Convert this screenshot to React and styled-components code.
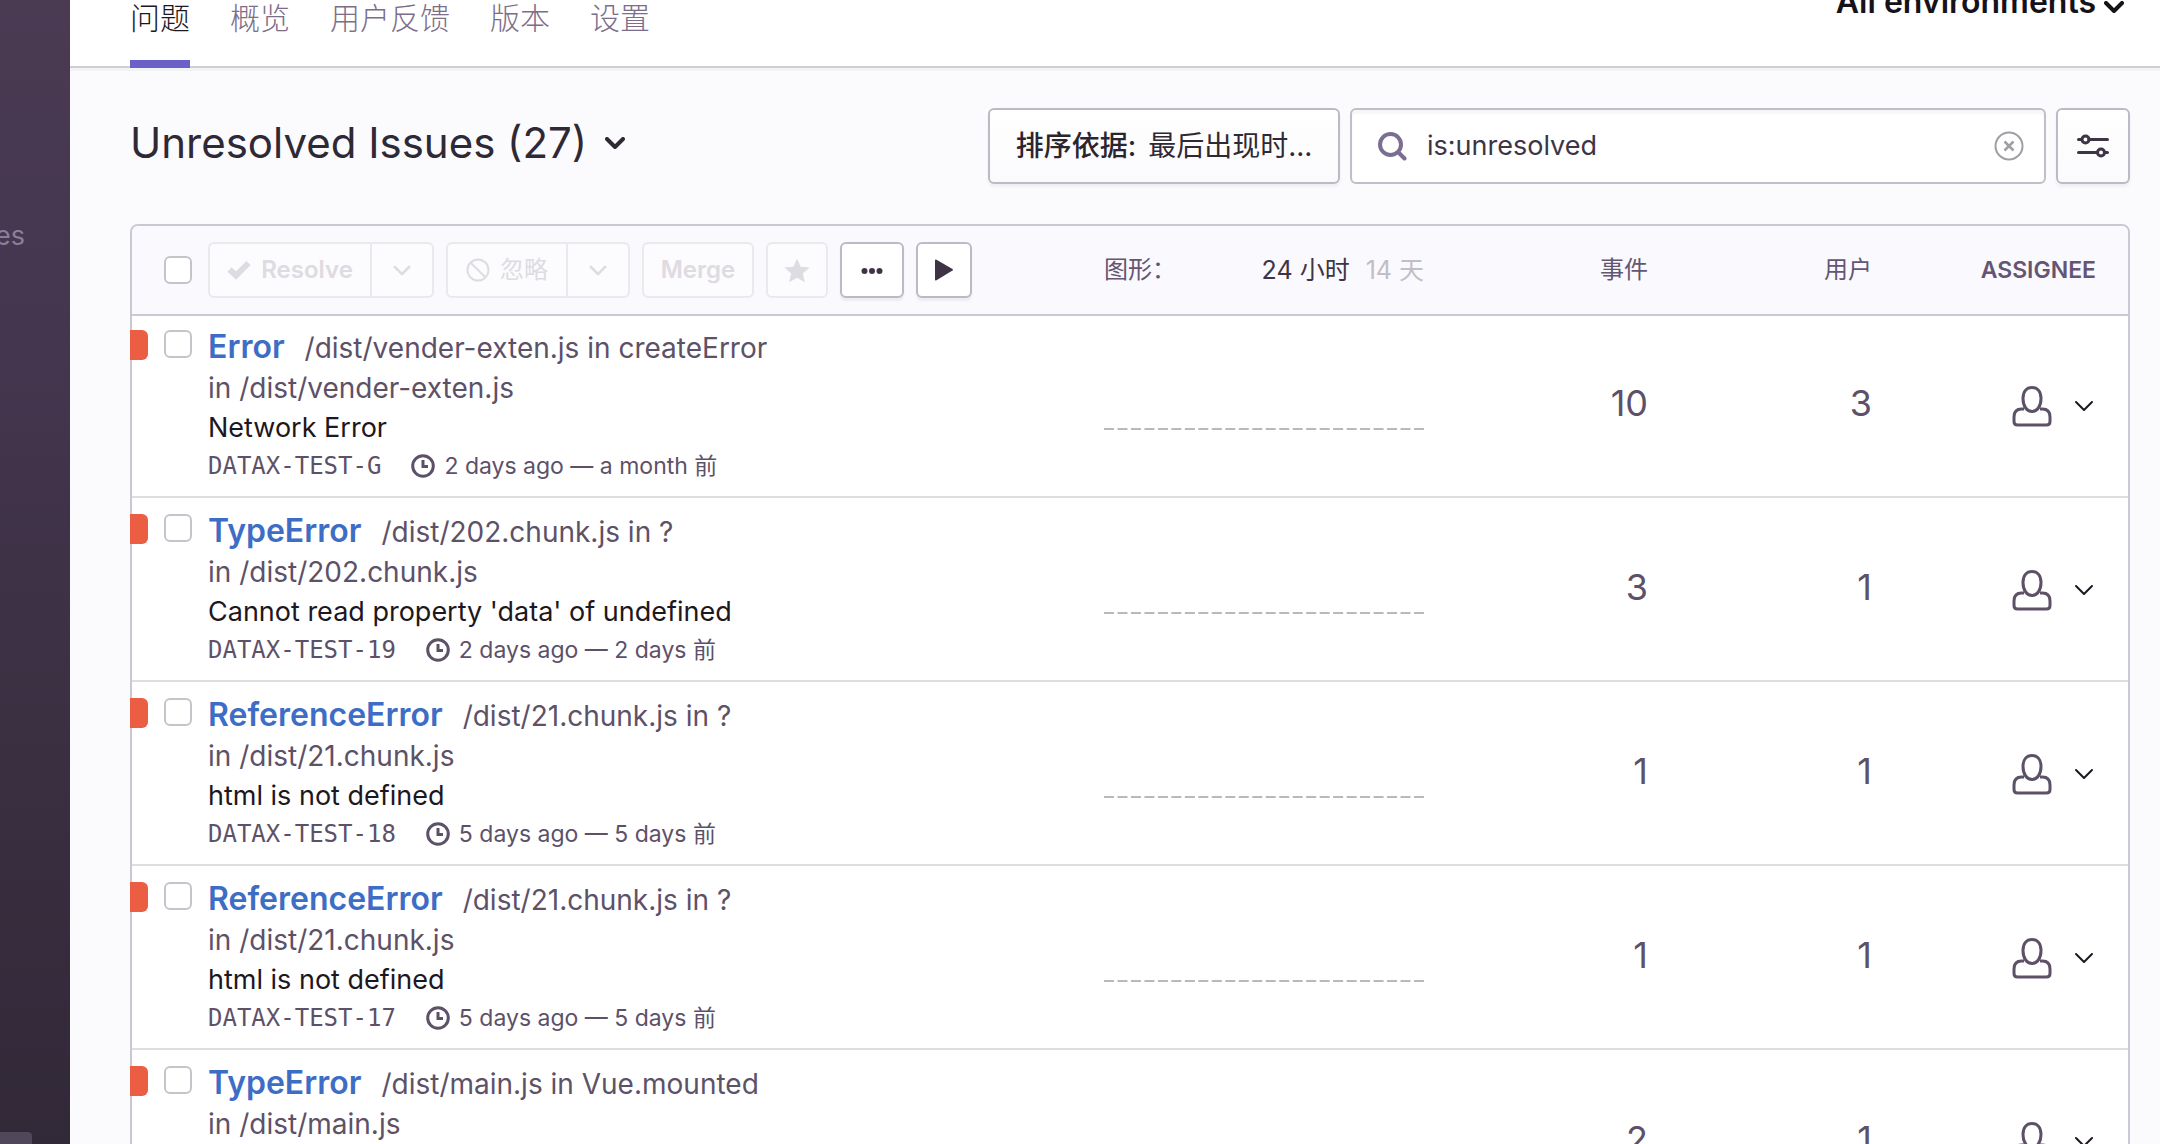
import React from "react";
import styled, { createGlobalStyle } from "styled-components";

const GlobalStyle = createGlobalStyle`
  * { box-sizing: border-box; }
  body {
    margin: 0;
    background: #fbfbfd;
    color: #2f2936;
    font: 400 27px/40px Inter, "Noto Sans CJK SC", sans-serif;
  }
  button, input { font: inherit; color: inherit; margin: 0; }
  button { cursor: pointer; }
  svg { display: block; flex: none; }
`;

const Shell = styled.div`
  display: flex;
  height: 100vh;
  overflow: hidden;
`;

const Sidebar = styled.nav`
  flex: none;
  width: 70px;
  display: flex;
  flex-direction: column;
  justify-content: space-between;
  padding-top: 216px;
  overflow: hidden;
  background: linear-gradient(#4a3a52 0%, #453750 25%, #382d3e 75%, #312838 100%);
`;

const SideLink = styled.a`
  color: #8d7d99;
  text-decoration: none;
  width: 25px;
  display: flex;
  justify-content: flex-end;
`;

const SideHandle = styled.div`
  width: 32px;
  height: 12px;
  border-top-right-radius: 4px;
  background: #51475a;
`;

const Main = styled.main`
  flex: 1;
  min-width: 0;
`;

const TopBar = styled.header`
  display: flex;
  justify-content: space-between;
  align-items: flex-start;
  height: 68px;
  padding: 0 30px 0 60px;
  background: #fff;
  border-bottom: 2px solid #cfced3;
  box-shadow: 0 3px 0 #f3f3f5;
`;

const Tabs = styled.div`
  display: flex;
  gap: 40px;
`;

const Tab = styled.a`
  height: 68px;
  font-size: 30px;
  font-weight: 300;
  line-height: 36px;
  text-decoration: none;
  color: ${(p) => (p.$active ? "#1d1721" : "#7c6e88")};
  border-bottom: 8px solid ${(p) => (p.$active ? "#6c5fc7" : "transparent")};
`;

const EnvButton = styled.button`
  display: flex;
  align-items: center;
  gap: 8px;
  margin-top: -18px;
  padding: 0 6px 0 0;
  border: 0;
  background: none;
  color: #161219;
  font-size: 32px;
  font-weight: 600;
  line-height: 40px;
`;

const EnvChevron = styled.span`
  padding-top: 10px;
`;

const Content = styled.div`
  padding: 40px 30px 0 60px;
`;

const Controls = styled.div`
  display: flex;
  align-items: center;
  gap: 10px;
  margin-bottom: 40px;
`;

const Heading = styled.h1`
  flex: 1;
  margin: 0;
  font-size: 42px;
  font-weight: 400;
  line-height: 70px;
`;

const HeadingButton = styled.button`
  display: flex;
  align-items: center;
  gap: 18px;
  padding: 0 0 6px;
  border: 0;
  background: none;
  line-height: 70px;
`;

const Control = styled.button`
  display: flex;
  align-items: center;
  justify-content: center;
  width: ${(p) => p.$width};
  height: 76px;
  padding: 0;
  border: 2px solid #bdbac6;
  border-radius: 6px;
  background: linear-gradient(#fff, #fbfafc);
  box-shadow: 0 3px 3px rgba(47, 41, 54, 0.05);
  font-size: 28px;
`;

const SortLabel = styled.span`
  font-weight: 500;
  color: #2b2530;
  margin-right: 12px;
`;

const SearchBox = styled.label`
  display: flex;
  align-items: center;
  width: 696px;
  height: 76px;
  padding: 0 20px 0 26px;
  border: 2px solid #c1bec9;
  border-radius: 6px;
  background: #fff;
  box-shadow: inset 0 4px 2px rgba(47, 41, 54, 0.04);
`;

const SearchInput = styled.input`
  flex: 1;
  min-width: 0;
  padding: 0 20px;
  border: 0;
  outline: 0;
  background: none;
  color: #3e3446;
`;

const IconButton = styled.button`
  padding: 0;
  border: 0;
  background: none;
`;

const Panel = styled.section`
  border: 2px solid #cbc8d4;
  border-radius: 8px;
  background: #fff;
`;

const Table = styled.table`
  width: 100%;
  table-layout: fixed;
  border-collapse: separate;
  border-spacing: 0;
`;

const Col = styled.col`
  width: ${(p) => p.$width};
`;

const Th = styled.th`
  height: 90px;
  padding: 0 ${(p) => p.$end || 0} 0 0;
  border-bottom: 2px solid #cbc8d4;
  background: #faf9fd;
  color: #645574;
  font-size: ${(p) => (p.$strong ? "23px" : "24px")};
  font-weight: ${(p) => (p.$strong ? 600 : 400)};
  text-align: ${(p) => (p.$strong || p.$right ? "right" : "left")};
  white-space: nowrap;
  &:first-child { border-top-left-radius: 6px; }
  &:last-child { border-top-right-radius: 6px; }
`;

const Toolbar = styled.div`
  display: flex;
  align-items: center;
  gap: 12px;
  padding-left: 32px;
`;

const CheckBox = styled.input`
  flex: none;
  appearance: none;
  width: 28px;
  height: 28px;
  margin: 0;
  border: 2px solid #c6c4ca;
  border-radius: 6px;
  background: #fff;
`;

const ButtonGroup = styled.div`
  display: flex;
  margin-left: ${(p) => p.$first ? "4px" : "0"};
`;

const ToolButton = styled.button`
  display: flex;
  align-items: center;
  justify-content: center;
  gap: 10px;
  width: ${(p) => p.$width};
  height: 56px;
  padding: 0;
  border: 2px solid ${(p) => (p.disabled ? "#eae9ee" : "#bdbac6")};
  border-radius: 6px;
  background: ${(p) => (p.disabled ? "#fcfbfd" : "#fff")};
  box-shadow: ${(p) => (p.disabled ? "none" : "0 3px 2px rgba(47, 41, 54, 0.06)")};
  color: ${(p) => (p.disabled ? "#dedce2" : "#3e3446")};
  font-size: 24px;
  font-weight: 600;
  ${ButtonGroup} &:first-child { border-radius: 6px 0 0 6px; }
  ${ButtonGroup} &:last-child { border-radius: 0 6px 6px 0; border-left: 0; }
`;

const IgnoreLabel = styled.span`
  font-weight: 400;
`;

const GraphHead = styled.div`
  display: flex;
  justify-content: space-between;
`;

const Periods = styled.div`
  display: flex;
  gap: 16px;
  font-size: 25px;
`;

const Period = styled.button`
  padding: 0;
  border: 0;
  background: none;
  color: ${(p) => (p.$active ? "#3e3446" : "#c1bec5")};
`;

const Td = styled.td`
  position: relative;
  height: 184px;
  vertical-align: top;
  padding: ${(p) => p.$top || "13px"} ${(p) => p.$end || 0} 0 0;
  border-bottom: 2px solid #dedde1;
  text-align: ${(p) => (p.$right ? "right" : "left")};
`;

const Row = styled.tr`
  &:first-child td { height: 182px; }
  &:first-child ${Td} > div { margin-top: -2px; }
`;

const Level = styled.span`
  position: absolute;
  left: -2px;
  top: ${(p) => (p.$first ? "14px" : "16px")};
  width: 18px;
  height: 30px;
  border-radius: 0 6px 6px 0;
  background: #ec5e44;
`;

const Issue = styled.div`
  display: flex;
  gap: 16px;
  padding-left: 32px;
  ${CheckBox} { margin-top: 3px; }
`;

const Summary = styled.div`
  min-width: 0;
  color: #5d5168;
  font-size: 28px;
  line-height: 40px;
`;

const Title = styled.div`
  display: flex;
  align-items: baseline;
  gap: 20px;
`;

const TitleLink = styled.a`
  color: #3d6dc4;
  font-size: 32px;
  font-weight: 600;
  text-decoration: none;
`;

const Message = styled.div`
  color: #1d1721;
  font-size: 27px;
`;

const Meta = styled.div`
  display: flex;
  align-items: center;
  font-size: 23px;
  line-height: 36px;
`;

const ShortId = styled.span`
  margin-right: 30px;
  font-size: 24px;
  font-family: "DejaVu Sans Mono", monospace;
`;

const Seen = styled.span`
  display: flex;
  align-items: center;
  gap: 9px;
`;

const Count = styled.div`
  color: #5d5168;
  font-size: 36px;
  line-height: 40px;
`;

const Assignee = styled.div`
  display: flex;
  justify-content: flex-end;
`;

const AssigneeButton = styled.button`
  display: flex;
  align-items: center;
  gap: 22px;
  padding: 0;
  border: 0;
  background: none;
`;

const Chevron = ({ size = 20, width = 3, color = "currentColor" }) => (
  <svg width={size} height={size / 2 + 2} viewBox="0 0 20 12" fill="none" stroke={color} strokeWidth={width} strokeLinecap="round" strokeLinejoin="round">
    <path d="M2 2l8 8 8-8" />
  </svg>
);

const CheckIcon = () => (
  <svg width="24" height="20" viewBox="0 0 24 20" fill="none" stroke="currentColor" strokeWidth="6">
    <path d="M2.500 9.500l6.500 6L21.500 3" />
  </svg>
);

const BanIcon = () => (
  <svg width="24" height="24" viewBox="0 0 24 24" fill="none" stroke="currentColor" strokeWidth="2">
    <circle cx="12" cy="12" r="10.500" />
    <path d="M4.500 4.500l15 15" />
  </svg>
);

const StarIcon = () => (
  <svg width="26" height="25" viewBox="0 0 26 25" fill="currentColor">
    <path d="M13 0.500l3.600 8.200 9 .8-6.800 6 2 8.800L13 19.700l-7.800 4.600 2-8.800-6.800-6 9-.8z" />
  </svg>
);

const MoreIcon = () => (
  <svg width="22" height="8" viewBox="0 0 22 8" fill="currentColor">
    <circle cx="3.500" cy="5" r="3" />
    <circle cx="11" cy="5" r="3" />
    <circle cx="18.500" cy="5" r="3" />
  </svg>
);

const PlayIcon = () => (
  <svg width="20" height="22" viewBox="0 0 20 22" fill="currentColor">
    <path d="M1 1.500Q1 0 2.500.8L18.500 10q1 .8 0 1.600L2.500 21.200Q1 22 1 20.500z" />
  </svg>
);

const SearchIcon = () => (
  <svg width="29" height="29" viewBox="0 0 29 29" fill="none" stroke="#7c6e92" strokeWidth="4" strokeLinecap="round">
    <circle cx="12.500" cy="12.500" r="10.500" />
    <path d="M20.500 20.500l6 6" />
  </svg>
);

const ClearIcon = () => (
  <svg width="30" height="30" viewBox="0 0 30 30" fill="none" stroke="#a19da6" strokeWidth="2">
    <circle cx="15" cy="15" r="13.500" />
    <path d="M10.500 10.500l9 9M19.500 10.500l-9 9" strokeWidth="2.500" />
  </svg>
);

const SlidersIcon = () => (
  <svg width="32" height="24" viewBox="0 0 32 24" fill="none" stroke="#3e3446" strokeWidth="3" strokeLinecap="round">
    <path d="M1.500 5.500h3M12 5.500h18.500M1.500 18.500h18.500M28 18.500h2.500" />
    <circle cx="8.500" cy="5.500" r="3.500" />
    <circle cx="24" cy="18.500" r="3.500" />
  </svg>
);

const ClockIcon = () => (
  <svg width="24" height="24" viewBox="0 0 24 24" fill="none" stroke="#5d5168" strokeWidth="3">
    <circle cx="12" cy="12" r="10.300" />
    <path d="M12 6v6.500h5" />
  </svg>
);

const UserIcon = () => (
  <svg width="40" height="42" viewBox="0 0 40 42" fill="none" stroke="#5d5168" strokeWidth="3" strokeLinejoin="round">
    <path d="M20 2.500c-5.500 0-9 4-9 11 0 8 4 13 9 13s9-5 9-13c0-7-3.500-11-9-11z" />
    <path d="M12 24H9.500Q2 24 2 32v4.500q0 3.500 3.500 3.500h29q3.500 0 3.500-3.500V32q0-8-7.500-8H28" />
  </svg>
);

const Sparkline = () => (
  <svg width="320" height="2" viewBox="0 0 320 2">
    {Array.from({ length: 24 }, (_, i) => (
      <rect key={i} x={(i * 310) / 23} y="0" width="10" height="2" fill="#bab8bd" />
    ))}
  </svg>
);

const tabs = ["问题", "概览", "用户反馈", "版本", "设置"];

const issues = [
  { type: "Error", where: "/dist/vender-exten.js in createError", file: "in /dist/vender-exten.js", message: "Network Error", id: "DATAX-TEST-G", seen: "2 days ago — a month 前", events: 10, users: 3 },
  { type: "TypeError", where: "/dist/202.chunk.js in ?", file: "in /dist/202.chunk.js", message: "Cannot read property 'data' of undefined", id: "DATAX-TEST-19", seen: "2 days ago — 2 days 前", events: 3, users: 1 },
  { type: "ReferenceError", where: "/dist/21.chunk.js in ?", file: "in /dist/21.chunk.js", message: "html is not defined", id: "DATAX-TEST-18", seen: "5 days ago — 5 days 前", events: 1, users: 1 },
  { type: "ReferenceError", where: "/dist/21.chunk.js in ?", file: "in /dist/21.chunk.js", message: "html is not defined", id: "DATAX-TEST-17", seen: "5 days ago — 5 days 前", events: 1, users: 1 },
  { type: "TypeError", where: "/dist/main.js in Vue.mounted", file: "in /dist/main.js", events: 2, users: 1 },
];

const IssueRow = ({ issue, first }) => (
  <Row>
    <Td>
      <Level $first={first} />
      <Issue>
        <CheckBox type="checkbox" aria-label={issue.type} />
        <Summary>
          <Title>
            <TitleLink href="#issue">{issue.type}</TitleLink>
            <span>{issue.where}</span>
          </Title>
          <div>{issue.file}</div>
          {issue.message && <Message>{issue.message}</Message>}
          {issue.id && (
            <Meta>
              <ShortId>{issue.id}</ShortId>
              <Seen>
                <ClockIcon />
                {issue.seen}
              </Seen>
            </Meta>
          )}
        </Summary>
      </Issue>
    </Td>
    <Td $top="114px">
      <div>
        <Sparkline />
      </div>
    </Td>
    <Td $right $top="69px">
      <Count>{issue.events}</Count>
    </Td>
    <Td $right $top="69px">
      <Count>{issue.users}</Count>
    </Td>
    <Td $right $top="71px" $end="34px">
      <Assignee>
        <AssigneeButton aria-label="Assignee">
          <UserIcon />
          <Chevron width={2} color="#1d1721" />
        </AssigneeButton>
      </Assignee>
    </Td>
  </Row>
);

export default function App() {
  return (
    <Shell>
      <GlobalStyle />
      <Sidebar>
        <SideLink href="#section">es</SideLink>
        <SideHandle />
      </Sidebar>
      <Main>
        <TopBar>
          <Tabs>
            {tabs.map((name, i) => (
              <Tab key={name} href="#tab" $active={i === 0}>
                {name}
              </Tab>
            ))}
          </Tabs>
          <EnvButton>
            All environments
            <EnvChevron>
              <Chevron width={4} />
            </EnvChevron>
          </EnvButton>
        </TopBar>
        <Content>
          <Controls>
            <Heading>
              <HeadingButton>
                Unresolved Issues (27)
                <Chevron width={4} />
              </HeadingButton>
            </Heading>
            <Control $width="352px">
              <SortLabel>排序依据:</SortLabel>
              <span>最后出现时...</span>
            </Control>
            <SearchBox>
              <SearchIcon />
              <SearchInput type="text" aria-label="Search" defaultValue="is:unresolved" />
              <IconButton aria-label="Clear">
                <ClearIcon />
              </IconButton>
            </SearchBox>
            <Control $width="74px" aria-label="Filters">
              <SlidersIcon />
            </Control>
          </Controls>
          <Panel>
            <Table>
              <colgroup>
                <Col />
                <Col $width="320px" />
                <Col $width="224px" />
                <Col $width="224px" />
                <Col $width="256px" />
              </colgroup>
              <thead>
                <tr>
                  <Th>
                    <Toolbar>
                      <CheckBox type="checkbox" aria-label="Select all" />
                      <ButtonGroup $first>
                        <ToolButton disabled $width="164px">
                          <CheckIcon />
                          Resolve
                        </ToolButton>
                        <ToolButton disabled $width="62px" aria-label="Resolve options">
                          <Chevron size={18} />
                        </ToolButton>
                      </ButtonGroup>
                      <ButtonGroup>
                        <ToolButton disabled $width="122px">
                          <BanIcon />
                          <IgnoreLabel>忽略</IgnoreLabel>
                        </ToolButton>
                        <ToolButton disabled $width="62px" aria-label="Ignore options">
                          <Chevron size={18} />
                        </ToolButton>
                      </ButtonGroup>
                      <ToolButton disabled $width="112px">Merge</ToolButton>
                      <ToolButton disabled $width="62px" aria-label="Bookmark">
                        <StarIcon />
                      </ToolButton>
                      <ToolButton $width="64px" aria-label="More">
                        <MoreIcon />
                      </ToolButton>
                      <ToolButton $width="56px" aria-label="Play">
                        <PlayIcon />
                      </ToolButton>
                    </Toolbar>
                  </Th>
                  <Th>
                    <GraphHead>
                      <span>图形：</span>
                      <Periods>
                        <Period $active>24 小时</Period>
                        <Period>14 天</Period>
                      </Periods>
                    </GraphHead>
                  </Th>
                  <Th $right>事件</Th>
                  <Th $right>用户</Th>
                  <Th $strong $end="32px">ASSIGNEE</Th>
                </tr>
              </thead>
              <tbody>
                {issues.map((issue, i) => (
                  <IssueRow key={i} issue={issue} first={i === 0} />
                ))}
              </tbody>
            </Table>
          </Panel>
        </Content>
      </Main>
    </Shell>
  );
}
